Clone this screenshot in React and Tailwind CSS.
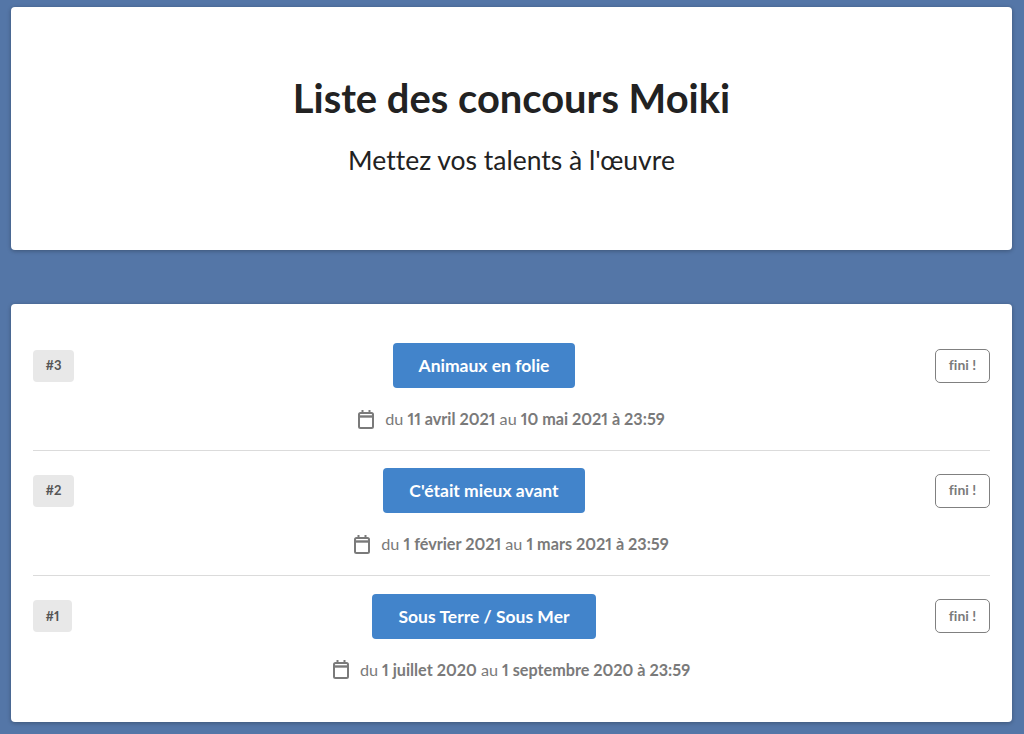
import React from 'react'

const contests = [
  { id: '#3', title: 'Animaux en folie', from: '11 avril 2021', to: '10 mai 2021 à 23:59' },
  { id: '#2', title: "C'était mieux avant", from: '1 février 2021', to: '1 mars 2021 à 23:59' },
  { id: '#1', title: 'Sous Terre / Sous Mer', from: '1 juillet 2020', to: '1 septembre 2020 à 23:59' },
]

const CalendarIcon = () => (
  <svg viewBox="0 0 16 19" className="w-4 h-[19px] mr-[11px]" fill="none" stroke="currentColor" strokeWidth="2">
    <rect x="1" y="3" width="14" height="15" rx="1.5" />
    <path d="M1 6.5h14" strokeWidth="2.4" />
    <path d="M4.5 0v3.5M11.5 0v3.5" />
  </svg>
)

const ContestRow = ({ contest, last }) => (
  <div className={last ? 'pt-[17.4px] pb-[19px]' : 'pt-[17.4px] pb-[19px] border-b border-[#dbdbdb]'}>
    <div className="flex items-center">
      <div className="flex-1 grid grid-cols-[1fr_auto_1fr] items-center">
        <span className="justify-self-start h-8 px-[12.5px] flex items-center rounded bg-[#e8e8e8] text-[#555555] text-[13px] font-bold proportional-nums">
          {contest.id}
        </span>
        <a className="h-[45px] px-[26px] pt-px flex items-center rounded bg-[#4284cb] text-white text-[17.5px] font-bold">
          {contest.title}
        </a>
        <span />
      </div>
      <span className="h-[34px] w-[55px] pb-[2px] flex items-center justify-center rounded-[5px] border border-[#808080] text-[#7a7a7a] text-[14px] font-bold [font-variant-ligatures:none]">
        fini !
      </span>
    </div>
    <div className="mt-[19px] h-6 flex items-center justify-center text-[#7a7a7a] text-[16.2px] proportional-nums">
      <CalendarIcon />
      <span>
        du <b>{contest.from}</b> au <b>{contest.to}</b>
      </span>
    </div>
  </div>
)

const App = () => {
  return (
    <div className="min-h-[734px] bg-[#5476a7] pl-[11px] pr-3 pt-[7px] pb-3 font-['Lato',sans-serif]">
      <div className="h-[243px] bg-white rounded shadow-[0_1px_4px_rgba(10,10,10,0.3)] flex flex-col items-center text-[#222222]">
        <h1 className="mt-[65px] text-[39.9px] leading-[52px] font-bold">Liste des concours Moiki</h1>
        <p className="mt-[18px] text-[26.5px] leading-[36px] [font-variant-ligatures:none]">Mettez vos talents à l'œuvre</p>
      </div>
      <div className="mt-[54px] bg-white rounded shadow-[0_1px_4px_rgba(10,10,10,0.3)] px-[22px] pt-[21.65px] pb-[21.15px]">
        {contests.map((c, i) => (
          <ContestRow key={c.id} contest={c} last={i === contests.length - 1} />
        ))}
      </div>
    </div>
  )
}

export default App
